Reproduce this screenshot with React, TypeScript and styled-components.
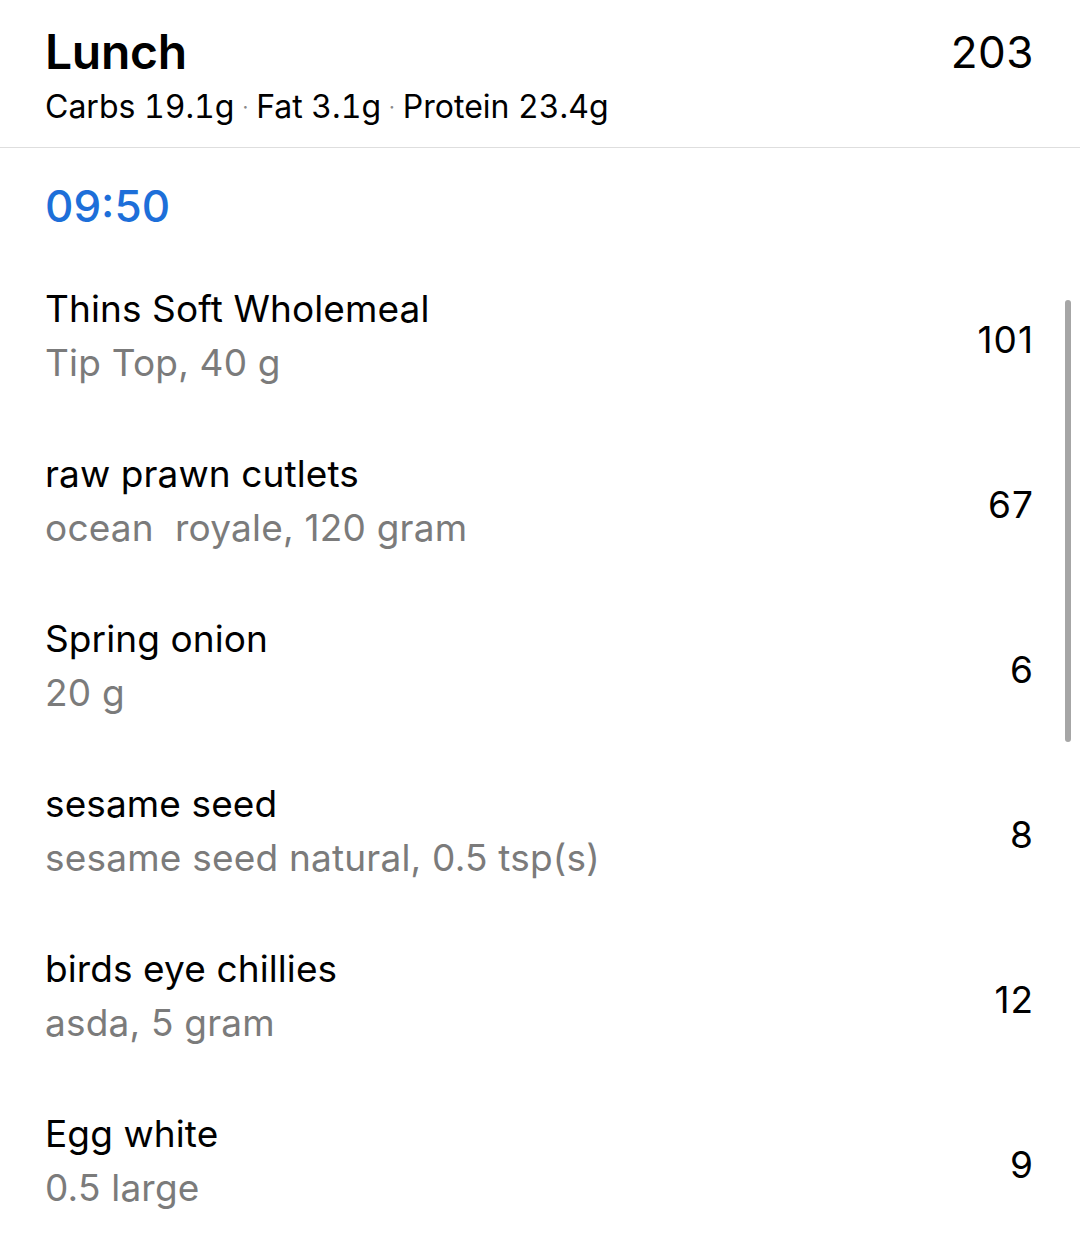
import styled, { createGlobalStyle } from "styled-components";

const GlobalStyle = createGlobalStyle`
  html, body {
    margin: 0;
    padding: 0;
    background: #ffffff;
    overflow: hidden;
  }
  body {
    font-family: Inter, "Noto Sans", "Liberation Sans", sans-serif;
    color: #000;
  }
`;

const Screen = styled.div`
  position: relative;
  width: 1080px;
  height: 1253px;
  background: #fff;
`;

const Header = styled.header`
  display: flex;
  justify-content: space-between;
  align-items: flex-start;
  padding: 24px 46px 21px 45px;
  border-bottom: 1.5px solid #dedede;
`;

const Title = styled.h1`
  margin: 0;
  font-size: 48px;
  line-height: 56px;
  font-weight: 600;
  letter-spacing: -0.3px;
`;

const Macros = styled.div`
  margin-top: 8px;
  font-size: 32px;
  line-height: 38px;
  letter-spacing: 0;
  font-feature-settings: "tnum" 1;
`;

const Dot = styled.span`
  color: #8a8a8a;
  margin: 0 8px;
  font-size: 20px;
  vertical-align: 4px;
`;

const Total = styled.div`
  font-size: 44px;
  line-height: 56px;
  font-weight: 400;
  letter-spacing: 0.5px;
`;

const Time = styled.div`
  padding: 30px 45px 0;
  font-size: 44px;
  line-height: 56px;
  color: #1d6fd9;
  font-weight: 500;
  height: 75px;
`;

const List = styled.ul`
  list-style: none;
  margin: 0;
  padding: 0;
`;

const Row = styled.li`
  display: flex;
  justify-content: space-between;
  align-items: center;
  height: 165px;
  padding: 0 46px 0 45px;
`;

const Info = styled.div`
  display: flex;
  flex-direction: column;
`;

const Name = styled.div`
  font-size: 37px;
  line-height: 54px;
  letter-spacing: 0.1px;
`;

const Detail = styled.div`
  font-size: 37px;
  line-height: 54px;
  color: #7b7b7b;
  letter-spacing: 0.2px;
`;

const Cals = styled.div`
  font-size: 37px;
  line-height: 54px;
  padding-top: 8px;
  letter-spacing: 1px;
`;

const ScrollThumb = styled.div`
  position: absolute;
  right: 9px;
  top: 300px;
  width: 6px;
  height: 442px;
  border-radius: 3px;
  background: #a6a6a6;
`;

const items = [
  { name: "Thins Soft Wholemeal", detail: "Tip Top, 40 g", cals: 101 },
  { name: "raw prawn cutlets", detail: "ocean\u00a0 royale, 120 gram", cals: 67 },
  { name: "Spring onion", detail: "20 g", cals: 6 },
  { name: "sesame seed", detail: "sesame seed natural, 0.5 tsp(s)", cals: 8 },
  { name: "birds eye chillies", detail: "asda, 5 gram", cals: 12 },
  { name: "Egg white", detail: "0.5 large", cals: 9 },
];

export default function App() {
  return (
    <Screen>
      <GlobalStyle />
      <Header>
        <div>
          <Title>Lunch</Title>
          <Macros>
            Carbs 19.1g<Dot>·</Dot>Fat 3.1g<Dot>·</Dot>Protein 23.4g
          </Macros>
        </div>
        <Total>203</Total>
      </Header>
      <Time>09:50</Time>
      <List>
        {items.map((it) => (
          <Row key={it.name}>
            <Info>
              <Name>{it.name}</Name>
              <Detail>{it.detail}</Detail>
            </Info>
            <Cals>{it.cals}</Cals>
          </Row>
        ))}
      </List>
      <ScrollThumb />
    </Screen>
  );
}
